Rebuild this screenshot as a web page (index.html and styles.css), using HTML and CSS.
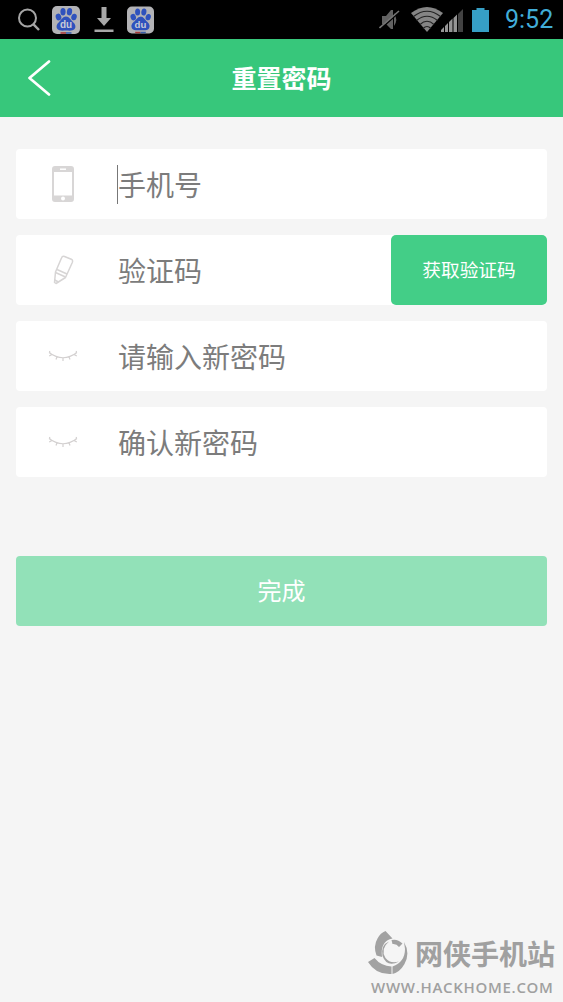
FILE: index.html
```
<!DOCTYPE html>
<html lang="zh-CN">
<head>
<meta charset="utf-8">
<title>重置密码</title>
<link rel="stylesheet" href="styles.css">
</head>
<body>
<div class="status-bar">
  <div class="status-left">
    <svg width="24" height="24" viewBox="0 0 24 24" fill="none" stroke="#a5a5a5" stroke-width="2"><circle cx="10.500" cy="10" r="8.500"/><path d="M16.500 16.300L22 22" stroke-width="2.400"/></svg>
    <svg class="paw-first" width="28" height="28" viewBox="0 0 28 28">
      <rect width="28" height="28" rx="5" fill="#b3b3b6"/>
      <g fill="#2f52bd">
        <ellipse cx="6.500" cy="11" rx="2.800" ry="3.400" transform="rotate(-15 6.500 11)"/>
        <ellipse cx="11" cy="5.700" rx="2.600" ry="3.700"/>
        <ellipse cx="17.500" cy="5.700" rx="2.600" ry="3.700" transform="rotate(10 17.500 5.700)"/>
        <ellipse cx="22" cy="11" rx="2.700" ry="3.300" transform="rotate(15 22 11)"/>
        <path d="M14 10.500c-3.300 0-4.600 3.500-6.900 5.400-2.800 2.400-3.200 5.200-1.700 7.200 1.800 2.200 5.600 1.500 8.600 1.500s6.800.7 8.600-1.500c1.500-2 1.100-4.800-1.700-7.200-2.300-1.900-3.600-5.400-6.900-5.400z"/>
      </g>
      <text x="14" y="22.400" text-anchor="middle" class="paw-text">du</text>
      <path d="M8.500 27h5.500" stroke="#a83a38" stroke-width="1.600"/><path d="M14 27h5.500" stroke="#395fa9" stroke-width="1.600"/>
    </svg>
    <svg class="download" width="20" height="26" viewBox="0 0 20 26" fill="#a8a8a8"><path d="M7.500 0h5v11h4.500L10 19 3 11h4.500zM.5 22.500h19V25H.5z"/></svg>
    <svg class="paw-second" width="27" height="28" viewBox="0 0 28 28">
      <rect width="28" height="28" rx="5" fill="#b3b3b6"/>
      <g fill="#2f52bd">
        <ellipse cx="6.500" cy="11" rx="2.800" ry="3.400" transform="rotate(-15 6.500 11)"/>
        <ellipse cx="11" cy="5.700" rx="2.600" ry="3.700"/>
        <ellipse cx="17.500" cy="5.700" rx="2.600" ry="3.700" transform="rotate(10 17.500 5.700)"/>
        <ellipse cx="22" cy="11" rx="2.700" ry="3.300" transform="rotate(15 22 11)"/>
        <path d="M14 10.500c-3.300 0-4.600 3.500-6.900 5.400-2.800 2.400-3.200 5.200-1.700 7.200 1.800 2.200 5.600 1.500 8.600 1.500s6.800.7 8.600-1.500c1.500-2 1.100-4.800-1.700-7.200-2.300-1.900-3.600-5.400-6.900-5.400z"/>
      </g>
      <text x="14" y="22.400" text-anchor="middle" class="paw-text">du</text>
      <path d="M8.500 27h5.500" stroke="#a83a38" stroke-width="1.600"/><path d="M14 27h5.500" stroke="#395fa9" stroke-width="1.600"/>
    </svg>
  </div>
  <div class="status-right">
    <svg width="21" height="23" viewBox="0 0 21 23"><path d="M3 8h4l5-6h2v19h-2l-5-5H3zM15 5q4.500 6.500 0 13" fill="#626262"/><path d="M1 21.500L20 4.500" stroke="#000" stroke-width="1.500"/><path d="M.5 20L20 3" stroke="#747474" stroke-width="1.600"/></svg>
    <svg class="wifi" width="32" height="25" viewBox="0 0 32 25"><path d="M0 6Q16-6 32 6L16 25z" fill="#858585"/><path d="M2.500 9.500Q16-1 29.500 9.500M5.500 13.500Q16 5 26.500 13.500M9 17.500Q16 11 23 17.500M12 21.500Q16 17.500 20 21.500" fill="none" stroke="#222" stroke-width="1.100"/></svg>
    <svg class="signal" width="22" height="24" viewBox="0 0 22 24"><path d="M0 24v-2l3-3v5zM4 24v-6l3-3v9zM8 24V14l3.500-3.500V24zM12.500 24V10l3.500-3.500V24z" fill="#959595"/><path d="M17 24V6l5-5v23z" fill="#424242"/></svg>
    <svg class="battery" width="17" height="24" viewBox="0 0 17 24"><path d="M4.500 0h8v2H17v22H0V2h4.500z" fill="#369fc5"/></svg>
    <span class="clock">9:52</span>
  </div>
</div>
<header class="header">
  <svg class="back" width="24" height="36" viewBox="0 0 24 36" fill="none" stroke="#fff" stroke-width="2.700" stroke-linecap="round" stroke-linejoin="round"><path d="M21 1.500L1.500 18 21 34.500"/></svg>
  <h1 class="title">重置密码</h1>
</header>
<main class="form">
  <div class="field">
    <div class="field-icon"><svg width="22" height="36" viewBox="0 0 22 36"><path fill-rule="evenodd" d="M3 0h16q3 0 3 3v30q0 3-3 3H3q-3 0-3-3V3Q0 0 3 0zM2 6v23.500h18V6z" fill="#d8d6d6"/><path d="M8 3.200h6" stroke="#fff" stroke-width="1.500"/><circle cx="11" cy="32.600" r="2" fill="#fff"/></svg></div>
    <span class="caret"></span><span class="placeholder">手机号</span>
  </div>
  <div class="field">
    <div class="field-icon"><svg width="21" height="30" viewBox="0 0 21 30" fill="none" stroke="#d7d5d5" stroke-width="1.500" stroke-linejoin="round"><path d="M8.500 3Q9.300 .8 11.500 1.500L18.300 4.200Q20.200 5.200 19.300 7.500L12.500 22.500 3 28.500 1.500 27.500 2.500 17z"/><path d="M4 14.500L14 19M2.500 17.500L12.500 22M1.700 25L5.500 27"/></svg></div>
    <span class="placeholder">验证码</span>
    <button class="code-button">获取验证码</button>
  </div>
  <div class="field">
    <div class="field-icon"><svg width="30" height="12" viewBox="0 0 30 12"><path d="M1 2.500Q15 13 29 2.500M4 4.500L1.200 6M2 3.200L1.500 1M9 6.800L8 9.500M15 7.800v3.200M21 6.800l1 2.700M26 4.500L28.800 6M28 3.200L28.500 1" class="lashes"/></svg></div>
    <span class="placeholder">请输入新密码</span>
  </div>
  <div class="field">
    <div class="field-icon"><svg width="30" height="12" viewBox="0 0 30 12"><path d="M1 2.500Q15 13 29 2.500M4 4.500L1.200 6M2 3.200L1.500 1M9 6.800L8 9.500M15 7.800v3.200M21 6.800l1 2.700M26 4.500L28.800 6M28 3.200L28.500 1" class="lashes"/></svg></div>
    <span class="placeholder">确认新密码</span>
  </div>
  <button class="submit">完成</button>
</main>
<div class="watermark">
  <div class="brand">
    <svg width="41" height="44" viewBox="0 0 41 44" fill="#a2a2a2"><path d="M17.500 0L24.500 7.500Q12 10 14 26L8.500 24.500Q5 15 9.500 7.500 12.500 1.800 17.500 0z"/><path d="M0 31L6.500 27Q13 35 23.500 35.500V43Q8 44 0 31z"/><path d="M24.500 35.500Q37 31 37 18L36 11Q42.500 22 36.500 33 32 41 24.500 43z"/><path d="M21 10.500Q12 18 17.500 27 22 33 31 30.500 19 37 14.500 25 12.500 14 21 10.500z"/><path d="M23.500 9L24.500 13Q28.500 12.500 31 16L34.500 12.500Q29.500 7.500 23.500 9z"/></svg>
    <span class="brand-name">网侠手机站</span>
  </div>
  <div class="brand-url">WWW.HACKHOME.COM</div>
</div>
</body>
</html>
```
FILE: styles.css
```
* { box-sizing: border-box; }
body {
  display: flex;
  flex-direction: column;
  height: 1002px;
  margin: 0;
  overflow: hidden;
  background: #f5f5f5;
  font-family: "Noto Sans CJK SC", sans-serif;
}
svg { display: block; flex: none; }
button { border: 0; padding: 0; color: #fff; font-family: inherit; }
.status-bar {
  display: flex;
  justify-content: space-between;
  flex: none;
  height: 39px;
  padding: 0 9px 0 17px;
  background: #000;
}
.status-left, .status-right { display: flex; align-items: center; }
.paw-first { margin-left: 11px; }
.download { margin-left: 14px; }
.paw-second { margin-left: 13px; }
.paw-text { fill: #c8cbd7; font: bold 10px "Liberation Sans", sans-serif; }
.wifi { margin-left: 11px; }
.signal { margin-left: -2px; }
.battery { margin: 0 16px 0 9px; }
.clock {
  width: 49px;
  color: #41add8;
  font: 25px/41px Roboto, sans-serif;
  white-space: nowrap;
}
.header {
  display: grid;
  grid-template-columns: 80px 1fr 80px;
  align-items: center;
  flex: none;
  height: 78px;
  background: #37c77b;
}
.back { margin-left: 28px; }
.title {
  margin: 0;
  padding-bottom: 3px;
  color: #fff;
  font-size: 25px;
  font-weight: 700;
  line-height: 34px;
  text-align: center;
}
.form {
  display: flex;
  flex-direction: column;
  gap: 16px;
  padding: 32px 16px 0;
}
.field {
  display: flex;
  align-items: center;
  height: 70px;
  border-radius: 4px;
  background: #fff;
}
.field-icon {
  display: flex;
  justify-content: center;
  width: 94px;
  margin-right: 8px;
}
.lashes { fill: none; stroke: #d3d0d0; stroke-width: 1.2; }
.caret {
  width: 1px;
  height: 39px;
  margin-left: -1px;
  background: #777;
}
.placeholder {
  color: #7c7c7c;
  font-size: 28px;
  line-height: 40px;
  white-space: nowrap;
}
.code-button {
  width: 156px;
  height: 70px;
  padding-bottom: 3px;
  margin-left: auto;
  border-radius: 5px;
  background: #43ce87;
  font-size: 18.700px;
}
.submit {
  height: 70px;
  padding-bottom: 3px;
  margin-top: 63px;
  border-radius: 4px;
  background: #92e1b8;
  font-size: 24px;
}
.watermark {
  width: 195px;
  margin: auto 0 2px auto;
  color: #a0a0a0;
}
.brand { display: flex; align-items: center; gap: 6px; }
.brand-name {
  font-size: 28px;
  font-weight: 700;
  line-height: 44px;
  white-space: nowrap;
}
.brand-url {
  padding-left: 3px;
  font: 600 15px/25px "Open Sans", sans-serif;
  letter-spacing: 0.7px;
  white-space: nowrap;
}
```
